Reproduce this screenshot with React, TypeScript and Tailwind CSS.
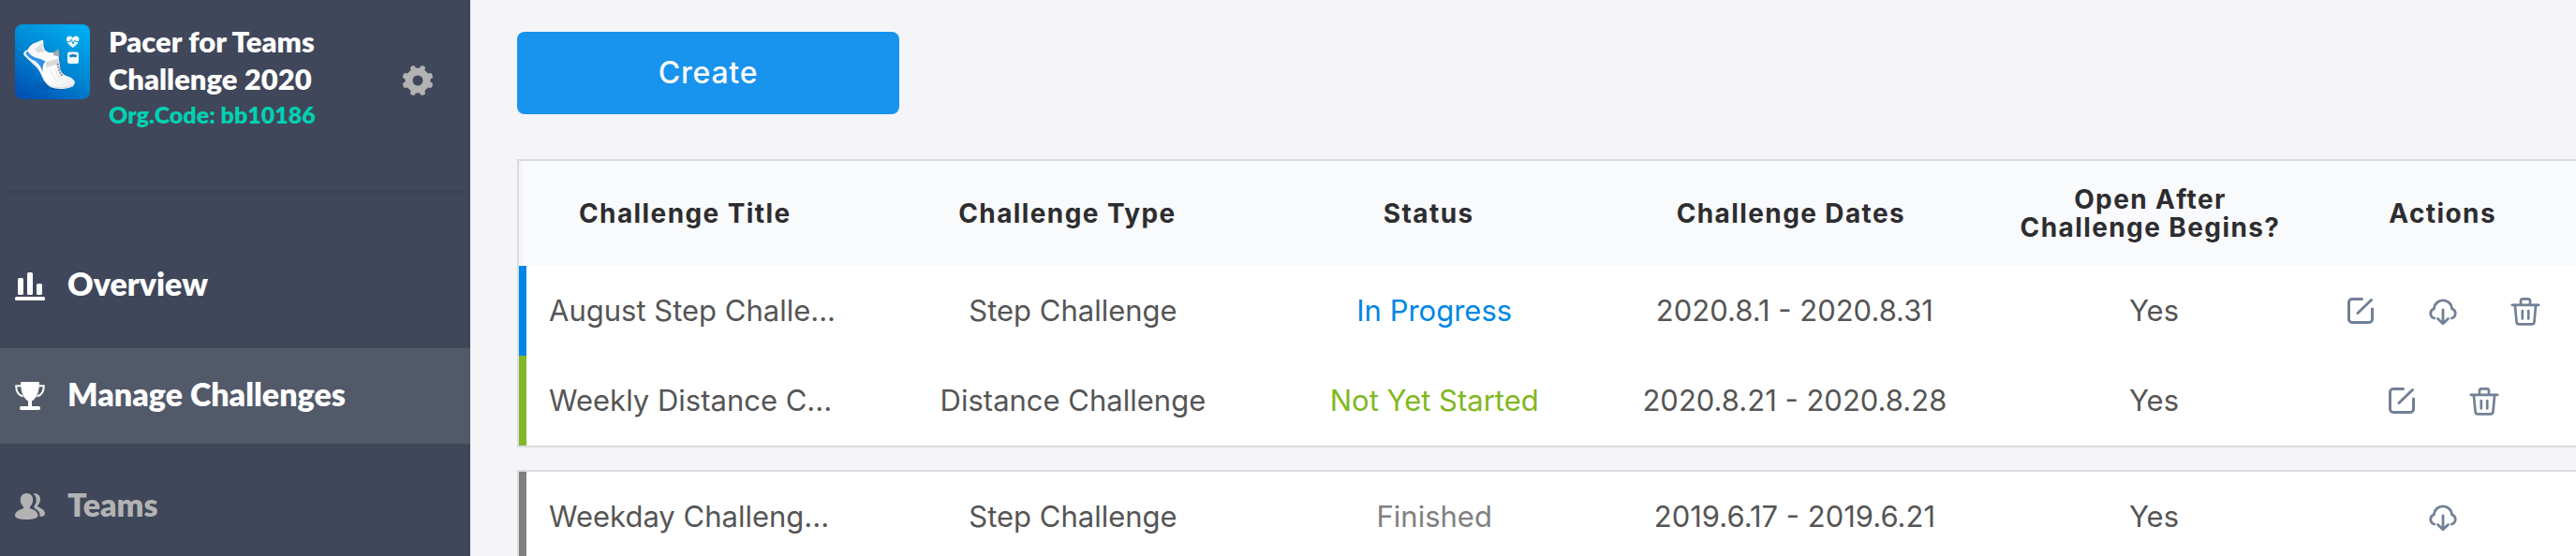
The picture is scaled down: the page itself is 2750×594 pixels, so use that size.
import type { ReactNode } from "react";

type Action = "edit" | "download" | "delete";

interface Challenge {
  title: string;
  type: string;
  status: string;
  statusClass: string;
  stripeClass: string;
  dates: string;
  open: string;
  actions: Action[];
}

const activeChallenges: Challenge[] = [
  {
    title: "August Step Challe...",
    type: "Step Challenge",
    status: "In Progress",
    statusClass: "text-[#0086e6]",
    stripeClass: "border-l-[#0086e6]",
    dates: "2020.8.1 - 2020.8.31",
    open: "Yes",
    actions: ["edit", "download", "delete"],
  },
  {
    title: "Weekly Distance C...",
    type: "Distance Challenge",
    status: "Not Yet Started",
    statusClass: "text-[#81b71f]",
    stripeClass: "border-l-[#84b728]",
    dates: "2020.8.21 - 2020.8.28",
    open: "Yes",
    actions: ["edit", "delete"],
  },
];

const pastChallenges: Challenge[] = [
  {
    title: "Weekday Challeng...",
    type: "Step Challenge",
    status: "Finished",
    statusClass: "text-[#808080]",
    stripeClass: "border-l-[#808080]",
    dates: "2019.6.17 - 2019.6.21",
    open: "Yes",
    actions: ["download"],
  },
];

function EditIcon() {
  return (
    <svg viewBox="0 0 32 32" className="size-8" fill="none" stroke="currentColor" strokeWidth="3" strokeLinecap="round" strokeLinejoin="round" aria-hidden="true">
      <path d="M17.5 3.5H7A3.5 3.5 0 0 0 3.5 7v18A3.5 3.5 0 0 0 7 28.500h18a3.5 3.5 0 0 0 3.500-3.500V14" />
      <path d="M27.500 4.500 13 18.500" />
    </svg>
  );
}

function DownloadIcon() {
  return (
    <svg viewBox="0 0 32 32" className="size-8" fill="none" stroke="currentColor" strokeWidth="2.8" strokeLinecap="round" strokeLinejoin="round" aria-hidden="true">
      <path d="M6.800 24A5.300 5.300 0 0 1 6.500 13.800V13A9.600 9.600 0 0 1 25.500 13v.8A5.300 5.300 0 0 1 25.200 24" />
      <path d="M16 15v14.500M10.500 24.500l5.500 5.200 5.500-5.200" />
    </svg>
  );
}

function TrashIcon() {
  return (
    <svg viewBox="0 0 32 32" className="size-8" fill="none" stroke="currentColor" strokeWidth="2.700" strokeLinecap="round" strokeLinejoin="round" aria-hidden="true">
      <path d="M1.800 9.800h28.400" />
      <path d="M11 9.500V5.600A2.200 2.200 0 0 1 13.200 3.400h5.600A2.200 2.200 0 0 1 21 5.600v3.900" />
      <path d="M4.900 10.200l1.600 17.300a3 3 0 0 0 3 2.900h13a3 3 0 0 0 3-2.900l1.600-17.300" />
      <path d="M12.800 16v8.500M19.200 16v8.500" />
    </svg>
  );
}

const actionIcons: Record<Action, { label: string; icon: ReactNode }> = {
  edit: { label: "Edit", icon: <EditIcon /> },
  download: { label: "Download", icon: <DownloadIcon /> },
  delete: { label: "Delete", icon: <TrashIcon /> },
};

function Logo() {
  return (
    <svg viewBox="0 0 80 80" className="size-20 shrink-0" aria-hidden="true">
      <defs>
        <linearGradient id="logoBg" x1="0.8" y1="0" x2="0.2" y2="1">
          <stop offset="0" stopColor="#00acf0" />
          <stop offset="0.5" stopColor="#0086d2" />
          <stop offset="1" stopColor="#0052b4" />
        </linearGradient>
        <linearGradient id="shoe" x1="0" y1="0" x2="1" y2="1">
          <stop offset="0" stopColor="#f4f4f4" />
          <stop offset="0.600" stopColor="#ffffff" />
          <stop offset="1" stopColor="#e6e9ee" />
        </linearGradient>
        <linearGradient id="shade" x1="0" y1="0" x2="1" y2="0">
          <stop offset="0" stopColor="#003f96" stopOpacity="0" />
          <stop offset="1" stopColor="#003f96" stopOpacity="0.600" />
        </linearGradient>
      </defs>
      <rect width="80" height="80" rx="8" fill="url(#logoBg)" />
      <path d="M14 66q12-6 22-3l18 6q-22 3-40-3z" fill="url(#shade)" />
      <path d="M28.500 17q2-.8 1.800 1.500-.6 5 1.500 9 3.500 3.500 9.500 2.500l5 3 2 15q2 6 8 7.500 7 2.500 7.700 6.500-.2 5-9 6.500-10 1.500-17-1.500-6-3.500-8.500-10-3-8-8-12.500L9.500 33q-1-2 .5-4l3.500-2q2-4.500 6-6.500z" fill="url(#shoe)" />
      <path d="M21 27l7.500-7q.5 6 3 9.500l-7 .5z" fill="#dcdcdc" />
      <path d="M13 28.500q3 4.500 8.500 7 6 1 11 4-3.500 4-3 12-2-8-7.500-12-8-3.500-10.500-8.500z" fill="#2f8fe8" />
      <path d="M10 31.500q4 6 11 10.500 4 4 7 11 3.500 9.500 10 13.500 10 3 24-.5" fill="none" stroke="#d4dbe6" strokeWidth="1" />
      <path d="M33 40.500l13-4 1.500 5.500-14.500 4.500z" fill="#dadada" />
      <path d="M41 30.500l5.500-4.500 1 8.500-6.500-1.500z" fill="#a9a9a9" />
      <path d="M45.500 42l1 5 2 5 2 3" fill="none" stroke="#8d8d8d" strokeWidth="2.200" strokeDasharray="2 1" />
      <path d="M38 48q2 8 7 13M43 47q1 6 5 11" fill="none" stroke="#e0e3e8" strokeWidth="1" />
      <path d="M61.700 25q-6.700-4.500-6.700-8.700 0-3.700 3.400-3.700 2.300 0 3.300 1.900 1-1.900 3.300-1.900 3.400 0 3.400 3.700 0 4.200-6.700 8.700z" fill="#e9f7fd" />
      <path d="M56 18.500h3l1.300-2.500 1.700 5 1.800-4 1 1.500h3" fill="none" stroke="#1c9fdf" strokeWidth="1" />
      <rect x="56" y="29.500" width="12" height="12.500" rx="2.200" fill="#f2f9fd" />
      <path d="M57.500 33.500q4.500-3.700 9 0l-1.800 2q-2.700-1.500-5.400 0z" fill="#1480c4" />
    </svg>
  );
}

function GearIcon() {
  return (
    <svg viewBox="0 0 32 32" className="size-8" fill="currentColor" aria-hidden="true">
      <path
        fillRule="evenodd"
        d="M9.500.6 12.500.2 14 2.400Q16 3.200 18 2.400L19.500.2 22.500.6 24 2 23.400 5 27 8.600 30 8 31.400 9.500 32 13 29.600 14.500Q29 16 29.600 17.500L32 19 31.400 22.500 30 24 27 23.400 23.400 27 24 30 22.500 31.400 19.500 31.800 18 29.600Q16 28.800 14 29.600L12.500 31.800 9.500 31.400 8 30 8.600 27 5 23.400 2 24 .6 22.500 0 19 2.400 17.500Q3 16 2.400 14.500L0 13 .6 9.500 2 8 5 8.600 8.600 5 8 2ZM16 10.500A5.500 5.500 0 1 0 16 21.500 5.500 5.500 0 1 0 16 10.500Z"
      />
    </svg>
  );
}

function ChartIcon() {
  return (
    <svg viewBox="0 0 32 32" className="size-8" fill="currentColor" aria-hidden="true">
      <rect x="3" y="8" width="6" height="18" rx="1.500" />
      <rect x="13" y="2" width="6" height="24" rx="1.500" />
      <rect x="23" y="14" width="6" height="12" rx="1.500" />
      <rect x="0" y="28" width="32" height="4" rx="1.500" />
    </svg>
  );
}

function TrophyIcon() {
  return (
    <svg viewBox="0 0 32 32" className="size-8" fill="currentColor" aria-hidden="true">
      <path d="M7 1h18q1 0 1 1-.2 10-3.500 15-2 3-4.500 4.500V27h-4v-5.500q-2.500-1.500-4.500-4.500Q6.200 12 6 2 6 1 7 1z" />
      <rect x="5" y="27" width="22" height="4" rx="1.700" />
      <path d="M6.500 5.200H1.200Q1.200 14.500 8.500 16.500M25.500 5.200h5.300q0 9.300-7.300 11.300" fill="none" stroke="currentColor" strokeWidth="2" />
    </svg>
  );
}

function TeamIcon() {
  return (
    <svg viewBox="0 0 32 32" className="size-8" fill="currentColor" aria-hidden="true">
      <path d="M12.500 2c4.200 0 6.700 3 6.700 7 0 3.200-1.400 5.600-3.200 7.500v1.700c4.800 1.200 8.500 3.600 8.500 7.300C24.500 29 19 30 12.300 30S0 29 0 25.500c0-3.700 4.200-6.100 9-7.300v-1.700C7.200 14.600 5.800 12.200 5.800 9c0-4 2.500-7 6.700-7z" />
      <path d="M19.500 2.500C24 1 27 4.500 27 8.500c0 3-1.200 4.800-2.600 6.300v1.700C28.500 18 32 20.200 32 23.500c0 2.500-2 3.500-5.500 3.500.6-5-2.500-7.300-6-9.200v-2.600c1.800-1.800 2.200-3.500 2.200-6.200 0-2.700-.8-4.500-3.200-6.500z" />
    </svg>
  );
}

function NavItem({ icon, label, className }: { icon: ReactNode; label: string; className: string }) {
  return (
    <a href="#" className={`flex h-[102px] items-center gap-6 px-4 text-[34px] font-extrabold ${className}`}>
      {icon}
      <span className="pb-1.5">{label}</span>
    </a>
  );
}

function Columns() {
  return (
    <colgroup>
      <col className="w-[18%]" />
      <col className="w-[17.6%]" />
      <col className="w-[17.6%]" />
      <col className="w-[17.5%]" />
      <col className="w-[17.5%]" />
      <col />
    </colgroup>
  );
}

function Rows({ items }: { items: Challenge[] }) {
  return (
    <tbody className="bg-white text-center text-[#555]">
      {items.map((c) => (
        <tr key={c.title} className="h-24">
          <td className={`truncate border-l-8 pl-6 text-left ${c.stripeClass}`}>{c.title}</td>
          <td>{c.type}</td>
          <td className={c.statusClass}>{c.status}</td>
          <td>{c.dates}</td>
          <td>{c.open}</td>
          <td className="pr-[26px]">
            <div className="flex justify-center gap-14 text-[#718096]">
              {c.actions.map((a) => (
                <button key={a} type="button" aria-label={actionIcons[a].label}>
                  {actionIcons[a].icon}
                </button>
              ))}
            </div>
          </td>
        </tr>
      ))}
    </tbody>
  );
}

export default function App() {
  return (
    <div className="flex min-h-screen overflow-hidden bg-[#f5f5f8] font-['Inter',sans-serif] text-[31px]">
      <aside className="w-[502px] shrink-0 bg-[#40475a] font-['Lato',sans-serif] text-white">
        <header className="mx-1 flex h-[206px] border-b-2 border-[#3b4255] pt-6 pl-3">
          <div className="pt-0.5">
            <Logo />
          </div>
          <div className="ml-5 w-[270px] font-extrabold">
            <h1 className="text-[31px] leading-10">Pacer for Teams Challenge 2020</h1>
            <p className="text-[25px] leading-9 text-[#00d1b2]">Org.Code: bb10186</p>
          </div>
          <button type="button" aria-label="Settings" className="mt-[46px] ml-11 self-start text-[#b3b3b3]">
            <GearIcon />
          </button>
        </header>
        <nav className="flex flex-col gap-4 pt-12">
          <NavItem icon={<ChartIcon />} label="Overview" className="text-white" />
          <NavItem icon={<TrophyIcon />} label="Manage Challenges" className="bg-[#525a6a] text-white" />
          <NavItem icon={<TeamIcon />} label="Teams" className="text-[#b3b3b3]" />
        </nav>
      </aside>
      <main className="h-screen min-w-0 flex-1 overflow-hidden pt-[34px] pl-[50px]">
        <button type="button" className="h-[88px] w-[408px] rounded-lg bg-[#1893ee] text-[32px] font-medium tracking-wide text-white">
          Create
        </button>
        <section className="mt-12 border-y-2 border-l-2 border-[#d9dde0]">
          <table className="w-full table-fixed border-collapse">
            <Columns />
            <thead className="bg-[#f9fafc] text-[28px] leading-[30px] tracking-wider text-[#2d2d30]">
              <tr className="h-28">
                <th className="pr-12 font-bold">Challenge Title</th>
                <th className="pr-3 font-bold">Challenge Type</th>
                <th className="pr-3 font-bold">Status</th>
                <th className="pr-2 font-bold">Challenge Dates</th>
                <th className="pr-2 font-bold">
                  Open After
                  <br />
                  Challenge Begins?
                </th>
                <th className="pr-[26px] font-bold">Actions</th>
              </tr>
            </thead>
            <Rows items={activeChallenges} />
          </table>
        </section>
        <section className="mt-6 border-y-2 border-l-2 border-[#d9dde0]">
          <table className="w-full table-fixed border-collapse">
            <Columns />
            <Rows items={pastChallenges} />
          </table>
        </section>
      </main>
    </div>
  );
}
